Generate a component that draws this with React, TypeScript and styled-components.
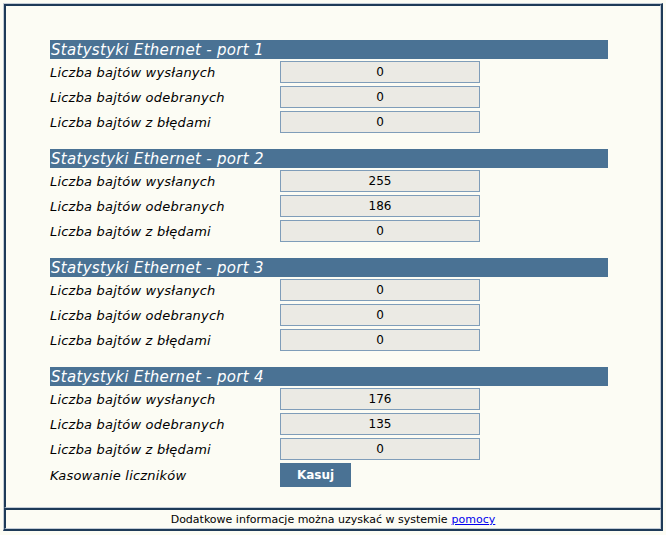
import React from "react";
import styled, { createGlobalStyle } from "styled-components";

const GlobalStyle = createGlobalStyle`
  html, body {
    margin: 0;
    padding: 0;
    background: #fcfcf4;
  }
  body {
    font-family: "DejaVu Sans", Verdana, sans-serif;
  }
`;

const Frame = styled.div`
  box-sizing: border-box;
  margin: 3px 0 0 3px;
  width: 660px;
  border-top: 1px solid #c3ccd6;
  border-left: 1px solid #c3ccd6;
  border-right: 2px solid #1e3a58;
  border-bottom: 2px solid #1e3a58;
  background: #fcfcf4;
`;

const Cell = styled.div`
  box-sizing: border-box;
  border-top: 2px solid #1e3a58;
  border-left: 2px solid #1e3a58;
  border-right: 1px solid #c3ccd6;
  border-bottom: 1px solid #c3ccd6;
`;

const Main = styled(Cell)`
  height: 504px;
  padding: 34px 0 0 44px;
`;

const Footer = styled(Cell)`
  height: 21px;
  display: flex;
  align-items: center;
  justify-content: center;
  font-size: 11px;
  color: #000;
  padding-top: 1px;
`;

const Link = styled.a`
  color: #0000ee;
  text-decoration: underline;
  margin-left: 4px;
`;

const Section = styled.section`
  display: flex;
  flex-direction: column;
  gap: 3px;
  margin-bottom: 16px;

  &:nth-of-type(4) {
    margin-top: 1px;
  }
`;

const Header = styled.div`
  width: 558px;
  height: 19px;
  background: #4a7294;
  color: #ffffff;
  font-size: 15px;
  letter-spacing: 0.3px;
  font-style: italic;
  line-height: 20px;
  padding-left: 1px;
  box-sizing: border-box;
  margin-bottom: -1px;
  white-space: nowrap;
`;

const Row = styled.div`
  display: flex;
  align-items: center;
  height: 22px;
`;

const Label = styled.div`
  width: 230px;
  font-size: 13px;
  letter-spacing: 0.2px;
  font-style: italic;
  color: #000;
  white-space: nowrap;
`;

const Value = styled.div`
  box-sizing: border-box;
  width: 200px;
  height: 22px;
  border: 1px solid #7f9db9;
  background: #ebeae4;
  font-family: "DejaVu Sans", Tahoma, sans-serif;
  font-size: 12px;
  color: #000;
  display: flex;
  align-items: center;
  justify-content: center;
`;

const ButtonRow = styled(Row)`
  height: 24px;
  margin-top: -13px;
`;

const Button = styled.button`
  width: 71px;
  height: 24px;
  border: none;
  background: #4a7294;
  color: #fff;
  font-family: "DejaVu Sans", Tahoma, sans-serif;
  font-weight: bold;
  font-size: 12px;
  padding: 0;
  cursor: pointer;
`;

const ports = [
  { port: 1, sent: 0, received: 0, errors: 0 },
  { port: 2, sent: 255, received: 186, errors: 0 },
  { port: 3, sent: 0, received: 0, errors: 0 },
  { port: 4, sent: 176, received: 135, errors: 0 },
];

export default function App() {
  return (
    <>
      <GlobalStyle />
      <Frame>
        <Main>
          {ports.map((p) => (
            <Section key={p.port}>
              <Header>Statystyki Ethernet - port {p.port}</Header>
              <Row>
                <Label>Liczba bajtów wysłanych</Label>
                <Value>{p.sent}</Value>
              </Row>
              <Row>
                <Label>Liczba bajtów odebranych</Label>
                <Value>{p.received}</Value>
              </Row>
              <Row>
                <Label>Liczba bajtów z błędami</Label>
                <Value>{p.errors}</Value>
              </Row>
            </Section>
          ))}
          <ButtonRow>
            <Label>Kasowanie liczników</Label>
            <Button>Kasuj</Button>
          </ButtonRow>
        </Main>
        <Footer>
          Dodatkowe informacje można uzyskać w systemie
          <Link href="#">pomocy</Link>
        </Footer>
      </Frame>
    </>
  );
}
